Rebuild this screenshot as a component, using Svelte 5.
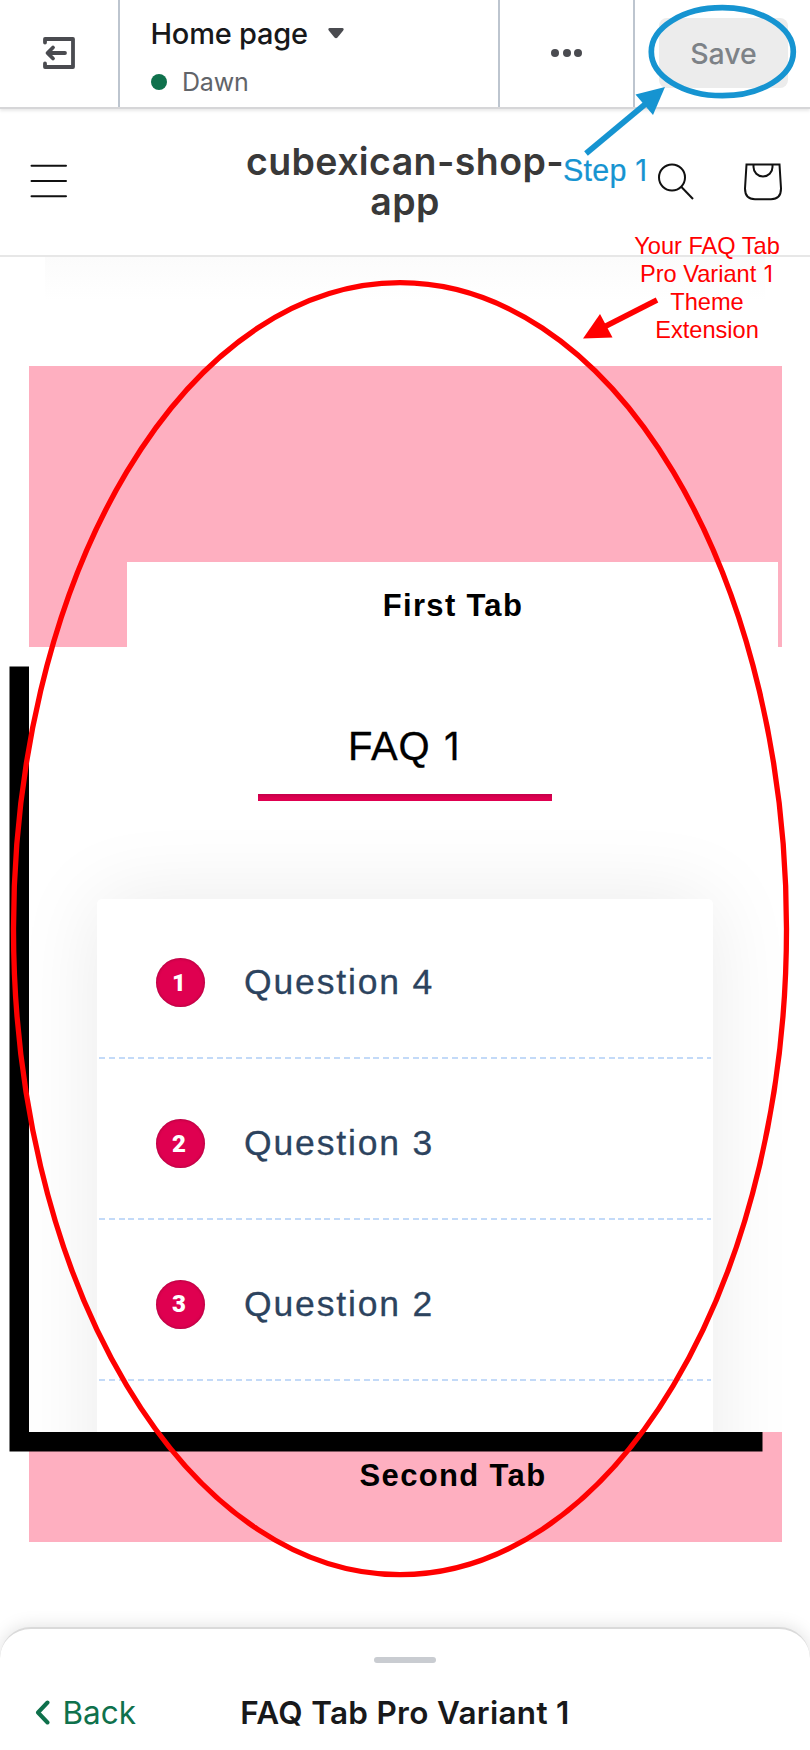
<script>
  const questions = ['Question 4', 'Question 3', 'Question 2'];
</script>

<main class="page">
  <header class="editor-bar">
    <div class="exit">
      <svg width="32" height="32" viewBox="0 0 32 32" fill="none" stroke="#4a4b50" stroke-width="3.800" stroke-linecap="round" stroke-linejoin="round">
        <path d="M2 5.500V2H30V30H2V26.500" />
        <path d="M22 16H5M10 10.500L4.500 16L10 21.500" />
      </svg>
    </div>
    <div class="theme">
      <div class="page-name">
        <span>Home page</span>
        <svg width="16" height="11" viewBox="0 0 16 11"><path d="M1.500 0H14.500Q16.500 .5 15.200 2.500L9.500 9.500Q8 11 6.500 9.500L.8 2.500Q-.5 .5 1.500 0Z" fill="#4a4b50" /></svg>
      </div>
      <div class="theme-name"><i></i><span>Dawn</span></div>
    </div>
    <div class="more"><i></i><i></i><i></i></div>
    <div class="save"><button>Save</button></div>
  </header>

  <section class="store-header">
    <svg class="menu" width="38" height="34" viewBox="0 0 38 34" stroke="#111" stroke-width="2" stroke-linecap="round"><path d="M1.500 1.700H36M1.500 17H36M1.500 32.300H36" /></svg>
    <h1>cubexican-shop-<br />app</h1>
    <div class="tools">
      <svg width="38" height="38" viewBox="0 0 38 38" fill="none" stroke="#111" stroke-width="2"><circle cx="15" cy="14.500" r="13" /><path d="M24.200 23.800L36 36" /></svg>
      <svg width="40" height="38" viewBox="0 0 40 38" fill="none" stroke="#111" stroke-width="2"><path d="M3.500 1.500H36.500L38 25.500Q38 36.200 28 36.200H12Q2 36.200 2 25.500Z" /><path d="M10.500 1.500V4a9.500 9.500 0 0 0 19 0V1.500" /></svg>
    </div>
  </section>

  <section class="preview">
    <div class="tabs">
      <div class="banner"><div class="tab first">First Tab</div></div>
      <div class="panel">
        <h2>FAQ <span class="one">1</span></h2>
        <div class="rule"></div>
        <div class="faq">
          {#each questions as question, i}
            <div class="question"><b>{i + 1}</b><span>{question}</span></div>
          {/each}
        </div>
      </div>
      <div class="tab second">Second Tab</div>
    </div>
  </section>

  <footer class="sheet">
    <div class="handle"></div>
    <div class="sheet-row">
      <div class="back">
        <svg width="15" height="25" viewBox="0 0 15 25" fill="none" stroke="#0f714c" stroke-width="4" stroke-linecap="round" stroke-linejoin="round"><path d="M12.500 2.500L3 12.500L12.500 22.500" /></svg>
        <span>Back</span>
      </div>
      <h3>FAQ Tab Pro Variant 1</h3>
    </div>
  </footer>

  <svg class="marks" width="810" height="1750" viewBox="0 0 810 1750" fill="none">
    <ellipse cx="400" cy="928.700" rx="386.500" ry="646" stroke="#f00" stroke-width="5.300" />
    <path d="M657 300L604 327" stroke="#f00" stroke-width="5.700" />
    <path d="M583 338.500L600 314L612.500 337.500Z" fill="#f00" />
    <ellipse cx="722.300" cy="51.700" rx="71" ry="44" stroke="#1694d1" stroke-width="5.700" />
    <path d="M586 153.500L646 103.500" stroke="#1694d1" stroke-width="5.700" />
    <path d="M665 87L635.500 94.500L653 115Z" fill="#1694d1" />
  </svg>
  <div class="note step">Step <span class="one">1</span></div>
  <div class="note extension">Your FAQ Tab<br />Pro Variant <span class="one">1</span><br />Theme<br />Extension</div>
</main>

<style>
  :global(body) { margin: 0; background: #fff; }
  .page { position: relative; display: flex; flex-direction: column; width: 810px; height: 1750px; overflow: hidden; background: #fff; font-family: Inter, sans-serif; }
  h1, h2, h3 { margin: 0; }
  .one { display: inline-block; width: .5em; font-family: Inter, sans-serif; font-size: .96em; line-height: 1; letter-spacing: 0; }

  .editor-bar { position: relative; z-index: 1; display: grid; grid-template-columns: 119.500px 380.500px 135px 1fr; flex: none; height: 107px; background: #fff; border-bottom: 2px solid #d6d6d8; box-shadow: 0 2px 3px rgba(0, 0, 0, .09); }
  .editor-bar > div { box-sizing: border-box; border-right: 2px solid #bdc5cf; }
  .editor-bar > div:last-child { border: 0; }
  .exit { display: flex; align-items: center; padding: 0 0 1px 43px; }
  .theme { padding: 13px 0 0 31px; }
  .page-name { display: flex; align-items: center; height: 40px; gap: 20px; color: #17181a; font-size: 29px; font-weight: 500; letter-spacing: -.22px; }
  .theme-name { display: flex; align-items: center; height: 34px; margin-top: 11.500px; gap: 15.500px; color: #616469; font-size: 25px; letter-spacing: -.2px; }
  .theme-name i { width: 16px; height: 16px; border-radius: 50%; background: #0f714c; }
  .more { display: flex; align-items: center; justify-content: center; gap: 3.700px; padding-bottom: 1px; }
  .more i { width: 8px; height: 8px; border-radius: 50%; background: #4a4b50; }
  .save { padding: 18px 0 0 24px; }
  .save button { display: block; width: 129px; height: 70px; padding: 0; border: 0; border-radius: 8px; background: #ececec; color: #7d8287; font: 500 28.500px Inter, sans-serif; }

  .store-header { display: grid; grid-template-columns: 210px 390px 1fr; flex: none; box-sizing: border-box; height: 148px; border-bottom: 2px solid #e7e7e7; }
  .menu { margin: 55px 0 0 29.500px; }
  h1 { padding-top: 33px; color: #393939; font-size: 37.500px; line-height: 40px; font-weight: 600; letter-spacing: .4px; text-align: center; }
  .tools { display: flex; justify-content: space-between; padding: 54px 27px 0 57px; }

  .preview { height: 1370px; padding: 108.500px 28px 0 29px; background: linear-gradient(#fbfbfb, #fff 44px) 50% 0 / 720px 100% no-repeat; }
  .tabs { display: flex; flex-direction: column; }
  .banner { display: flex; align-items: flex-end; height: 281px; background: #feafc0; }
  .tab { box-sizing: border-box; color: #000; font: bold 31px/36px "Liberation Sans", Arial, sans-serif; text-align: center; }
  .first { width: 651px; height: 85px; margin-left: 98px; padding: 26px 0 0 1px; background: #fff; letter-spacing: 1.300px; }
  .panel { box-sizing: border-box; height: 785.500px; padding: 72px 69.500px 0 68px; background: #fff; box-shadow: -19.500px 19.500px 0 #000; clip-path: inset(0 0 -20px -20px); overflow: hidden; }
  h2 { height: 75.500px; color: #000; font: 400 40px/54px "Liberation Sans", Arial, sans-serif; letter-spacing: .8px; text-align: center; -webkit-text-stroke: .3px #000; }
  .rule { width: 294.500px; height: 6.500px; margin: 0 auto; background: linear-gradient(#c5004a, #df0050 60%); }
  .faq { height: 700px; margin-top: 98px; border-radius: 5px; background: #fff; box-shadow: 0 0 84px rgba(0, 0, 0, .085); }
  .question { display: flex; align-items: center; box-sizing: border-box; height: 160.700px; padding: 8px 0 0 59px; gap: 39px; background: repeating-linear-gradient(90deg, #c3daf8 0 6px, transparent 6px 9.800px) 2px 100% / 612px 2px no-repeat; color: #2c435e; font: 35.500px "Liberation Sans", Arial, sans-serif; letter-spacing: 1.850px; -webkit-text-stroke: .3px #2c435e; }
  .question b { display: flex; align-items: center; justify-content: center; box-sizing: border-box; width: 49px; height: 49px; padding-right: 3px; border-radius: 50%; background: #df0050; box-shadow: inset 0 0 3px rgba(80, 0, 30, .5); color: #fff; font: 900 24px Roboto, sans-serif; letter-spacing: 0; -webkit-text-stroke: 0; }
  .second { height: 109.500px; padding: 26px 0 0 95px; background: #feafc0; letter-spacing: 1.350px; }

  .sheet { position: absolute; left: 0; bottom: 0; box-sizing: border-box; width: 810px; height: 123px; padding-top: 28px; border-top: 2px solid #dadada; border-radius: 31px 31px 0 0; background: #fff; box-shadow: 0 0 18px rgba(0, 0, 0, .13); }
  .handle { width: 62px; height: 6px; margin: 0 auto; border-radius: 3px; background: #c9ccd1; }
  .sheet-row { display: grid; grid-template-columns: 205px 400px 205px; align-items: center; height: 50px; margin-top: 24px; }
  .back { display: flex; align-items: center; gap: 12.500px; padding-left: 35px; color: #0f714c; font-size: 31.500px; }
  h3 { color: #18191b; font-size: 31.500px; font-weight: 600; letter-spacing: .3px; text-align: center; white-space: nowrap; }

  .marks { position: absolute; inset: 0; z-index: 2; }
  .note { position: absolute; z-index: 3; font-family: "Liberation Sans", Arial, sans-serif; white-space: nowrap; }
  .step { left: 563px; top: 153px; color: #1694d1; font-size: 30.500px; line-height: 34px; letter-spacing: .2px; -webkit-text-stroke: .2px #1694d1; }
  .extension { left: 607px; top: 232px; width: 200px; color: #f00; font-size: 23.600px; line-height: 28px; text-align: center; }
</style>
